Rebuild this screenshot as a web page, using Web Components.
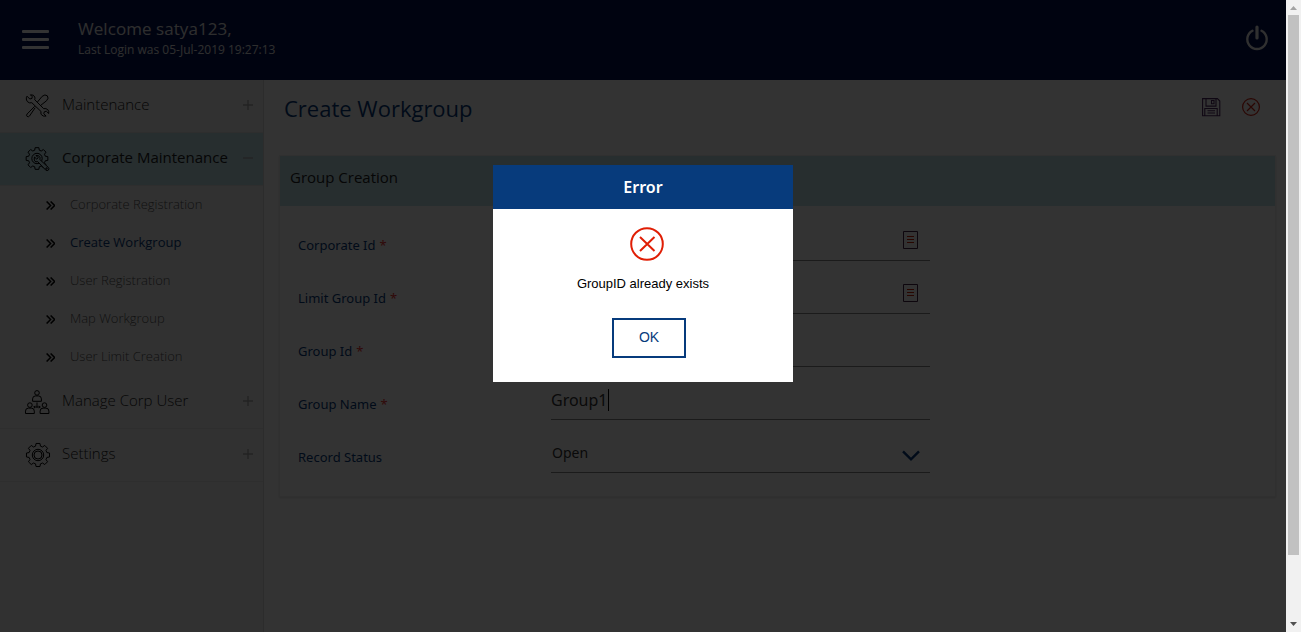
<!DOCTYPE html>
<html lang="en">
<head>
<meta charset="utf-8">
<title>Create Workgroup</title>
<style>
html,body{margin:0;height:100%;overflow:hidden;background:#fff}
body{font-family:"Noto Sans","Open Sans",sans-serif}
</style>
</head>
<body>
<bank-app></bank-app>
<script>
const define=(name,html)=>customElements.define(name,class extends HTMLElement{
  connectedCallback(){
    if(this.shadowRoot)return;
    const t=document.createElement('template');
    t.innerHTML=typeof html==='function'?html(this):html;
    this.attachShadow({mode:'open'}).append(t.content.cloneNode(true));
  }
});

const gear=(cx,cy,r,R)=>{
  const p=[];
  for(let i=0;i<8;i++){
    const a=i*Math.PI/4-Math.PI/2;
    [[-.27,r],[-.17,R],[.17,R],[.27,r]].forEach(([d,q])=>p.push((cx+q*Math.cos(a+d)).toFixed(2)+' '+(cy+q*Math.sin(a+d)).toFixed(2)));
  }
  return 'M'+p.join('L')+'Z';
};
const person=(x,y)=>`<circle cx="${x}" cy="${y}" r="2.3"/><path d="M${x-4.4} ${y+8.4}v-2.4q0-3 3-3h2.8q3 0 3 3v2.4z"/>`;
const icons={
  tools:`<path d="M2 2.2 4.8 5 7 4.4 7.2 2.6 5.4.8q3.5-.4 4.4 2.3.3 1.4-.1 2.6l8.9 8.9q2.600-.5 4.200 1.100 1.400 1.500.9 3.800l-2.400-2.300-2 .6-.5 1.900 2.300 2.400q-3.400.7-4.900-1.700-.7-1.400-.1-2.800L6.800 8.700Q4.400 9.500 2.600 7.800 1 6.200 1.300 3.800z"/><path d="m12.400 8.100 4.700-5.700q3-2.600 5.200-.6 1.900 2.300-.7 4.900l-5.800 4.600M10.200 13.700 4.500 22q-1 1.300-2.400.4-1.200-1.100.1-2.500l7.500-7.600"/>`,
  corp:`<path d="${gear(12,11.500,8.600,11)}"/><circle cx="12" cy="11.500" r="5.200"/><path d="M9.500 10l2.300 2.200 1.400-1.500-2.200-2.200q3.300-.5 4 2 .2 1-.3 1.900l8.300 7.700q1.600 1.500.5 2.900-1.400 1.300-3-.1l-7.800-8.300q-2 .8-3.100-.8-.7-1.500-.1-3.800z" fill="#c1e3ea"/><circle cx="21.500" cy="21.500" r=".7"/>`,
  users:person(12,2.9)+person(4.9,15.1)+person(19.500,15.100)+`<path d="M12 12.500v5M8.800 17h6.400m-5.200-1.200L8.800 17l1.200 1.200m4-2.400 1.200 1.200-1.200 1.200"/>`,
  settings:`<path d="${gear(13,12,9.200,11.700)}" stroke-linejoin="round"/><circle cx="13" cy="12" r="5.700"/><circle cx="13" cy="12" r="4"/>`
};

define('top-bar',`<style>
:host{display:flex;box-sizing:border-box;height:80px;background:#000f50;color:#e6e6e6;padding:0 17px 0 22px;align-items:center}
.burger{display:grid;gap:5px;width:27px;margin-right:29px;margin-top:-1px}
.burger i{height:3px;background:#fff;border-radius:1px}
.text{flex:1;margin-top:-3px}
.hi{font:17px/22px "Open Sans",sans-serif;margin-top:-1px;letter-spacing:.06px}
.last{font:12px/18px "Open Sans",sans-serif;margin-top:1px}
svg{margin-top:-4px}
</style>
<div class="burger"><i></i><i></i><i></i></div>
<div class="text"><div class="hi">Welcome satya123,</div><div class="last">Last Login was 05-Jul-2019 19:27:13</div></div>
<svg width="24" height="26" fill="none" stroke="#eee" stroke-width="2.400" stroke-linecap="round"><path d="M7.500 5.700a9.700 9.700 0 1 0 9 0"/><path d="M12 2v11" stroke-width="3.200"/></svg>`);

define('menu-group',el=>`<style>
:host{display:block}
.row{display:flex;height:52px;align-items:center;border-bottom:1px solid #e6e6e6;padding:0 10px 0 25px;color:#222;font:300 15px/20px "Open Sans",sans-serif}
:host([open]) .row{background:#c1e3ea;font-weight:400}
svg.ic{width:24px;height:24px;margin-right:13px;fill:none;stroke:#000;stroke-width:1;overflow:visible}
span{flex:1;margin-top:-4px}
.sign{margin-top:-2px}
</style>
<div class="row"><svg class="ic" viewBox="0 0 24 24">${icons[el.getAttribute('icon')]}</svg><span>${el.getAttribute('label')}</span>
<svg class="sign" width="10" height="10" stroke="#aaa" stroke-width="1.300"><path d="M0 5h10${el.hasAttribute('open')?'':'M5 0v10'}"/></svg></div><slot></slot>`);

define('menu-item',`<style>
:host{display:flex;box-sizing:border-box;height:38px;align-items:center;padding:0 0 2px 46px;color:#555;font:300 13px/18px "Open Sans",sans-serif}
:host([active]){color:#073b7c;font-weight:400}
svg{margin:2px 15px 0 0}
</style><svg width="9" height="9" fill="none" stroke="#000" stroke-width="1.500"><path d="m.6.500 4 4-4 4m4-8 4 4-4 4"/></svg><slot></slot>`);

define('side-menu',`<style>
:host{display:block;box-sizing:border-box;width:264px;border-right:1px solid #dcdcdc;background:#f2f2f2}
</style>
<menu-group icon="tools" label="Maintenance"></menu-group>
<menu-group icon="corp" label="Corporate Maintenance" open>
<menu-item>Corporate Registration</menu-item><menu-item active>Create Workgroup</menu-item><menu-item>User Registration</menu-item><menu-item>Map Workgroup</menu-item><menu-item>User Limit Creation</menu-item>
</menu-group>
<menu-group icon="users" label="Manage Corp User"></menu-group>
<menu-group icon="settings" label="Settings"></menu-group>`);

define('form-row',el=>`<style>
:host{display:flex;height:53px;font:13px/18px "Noto Sans",sans-serif;color:#073b7c}
label{width:253px;padding-top:27px;flex:none}
b{color:#f03030;font-weight:400;margin-left:.5px}
.field{box-sizing:border-box;width:379px;height:52px;border-bottom:1px solid #888;display:flex;align-items:center;padding:12px 9px 0 0;color:#333;font-size:16px}
.field.sel{font-size:14px;padding-left:1px}
.caret{width:1px;height:22px;background:#000}
.end{margin-left:auto;margin-right:2px;margin-top:-2px}
</style><label>${el.getAttribute('label')}${el.hasAttribute('required')?' <b>*</b>':''}</label>
<div class="field ${el.getAttribute('kind')==='select'?'sel':''}"><slot></slot>${{
lookup:'<svg class="end" width="16" height="18" fill="none"><path d="M.5.500h14v17H.5z" stroke="#402040"/><path d="M4 5.500h7M4 8.500h7M4 11.500h7" stroke="#c82000"/></svg>',
focus:'<i class="caret"></i>',
select:'<svg class="end" style="margin-right:0;margin-top:5px" width="19" height="11" fill="none" stroke="#073b7c" stroke-width="2.400"><path d="m1 1.300 8 8 8-8"/></svg>'}[el.getAttribute('kind')]||''}</div>`);

define('form-card',`<style>
:host{display:block;box-sizing:border-box;height:342px;border:1px solid #f0f0f0;box-shadow:0 1px 2px #ddd}
h2{box-sizing:border-box;margin:0;height:50px;padding:11px 10px;background:#c1e3ea;color:#222;font:400 15px/20px "Open Sans",sans-serif}
.rows{padding:3px 18px}
</style><h2>Group Creation</h2><div class="rows"><slot></slot></div>`);

define('work-page',`<style>
:host{display:block;flex:1;padding:0 10px 0 15px;background:#fff}
header{display:flex;height:75px;box-sizing:border-box;padding:13px 15px 0 5px;align-items:flex-start}
h1{margin:0;flex:1;color:#073b7c;font:400 22px/30px "Open Sans",sans-serif}
svg{margin-top:5px;fill:none}
svg+svg{margin-left:21px}
</style>
<header><h1>Create Workgroup</h1>
<svg width="19" height="19" stroke="#4d2460" stroke-width="1.100"><path d="M.6.600h14.800l2.400 2.400v14.800H.6zM4 .6v7.500h10V.6M9.500 2.500H12v3.300H9.500zM2.800 17.500v-7h12.400v7M5.500 12.700h7.500M5.500 15h7.500"/></svg>
<svg width="19" height="19" stroke="#d02010" stroke-width="1.200"><circle cx="9" cy="9" r="8.400"/><path d="m5 5 8 8m0-8-8 8"/></svg></header>
<form-card>
<form-row label="Corporate Id" required kind="lookup"></form-row>
<form-row label="Limit Group Id" required kind="lookup"></form-row>
<form-row label="Group Id" required></form-row>
<form-row label="Group Name" required kind="focus">Group1</form-row>
<form-row label="Record Status" kind="select">Open</form-row>
</form-card>`);

define('error-dialog',`<style>
:host{position:absolute;inset:0 15px 0 0;background:rgba(0,0,0,.8)}
.box{position:absolute;left:493px;top:165px;width:300px;height:217px;background:#fff;display:flex;flex-direction:column;align-items:center}
h3{margin:0;width:100%;background:#073b7c;color:#fff;text-align:center;font:600 16px/44px "Noto Sans",sans-serif}
svg{margin:18px 0 0 8px}
p{margin:14px 0 0;color:#000;font:13px/18px "Liberation Sans",Arial,sans-serif}
button{box-sizing:border-box;margin:25px 0 0 12px;width:74px;height:40px;padding:0 0 2px;border:2px solid #073b7c;background:#fff;color:#073b7c;font:14px/18px "Liberation Sans",Arial,sans-serif}
</style><div class="box"><h3>Error</h3>
<svg width="34" height="34" fill="none" stroke="#e01e05" stroke-width="2"><circle cx="17" cy="17" r="15.800"/><path d="m10 10 14.500 14m0-14-14.500 14"/></svg>
<p>GroupID already exists</p><button>OK</button></div>`);

define('scroll-bar',`<style>
:host{display:flex;flex-direction:column;width:15px;height:100%;background:#f1f1f1}
i{margin:0 2px;height:540px;background:#c1c1c1}
svg{display:block;height:15px;width:15px}
.down{margin-top:auto}
</style><svg fill="#a3a3a3"><path d="M4 10h7L7.500 6z"/></svg><i></i><svg class="down" fill="#505050"><path d="M4 5h7L7.500 9z"/></svg>`);

define('bank-app',`<style>
:host{display:flex;position:relative;height:632px;width:1301px;overflow:hidden}
.page{flex:1;display:flex;flex-direction:column}
.body{flex:1;display:flex}
</style><div class="page"><top-bar></top-bar><div class="body"><side-menu></side-menu><work-page></work-page></div></div>
<scroll-bar></scroll-bar><error-dialog></error-dialog>`);
</script>
</body>
</html>
